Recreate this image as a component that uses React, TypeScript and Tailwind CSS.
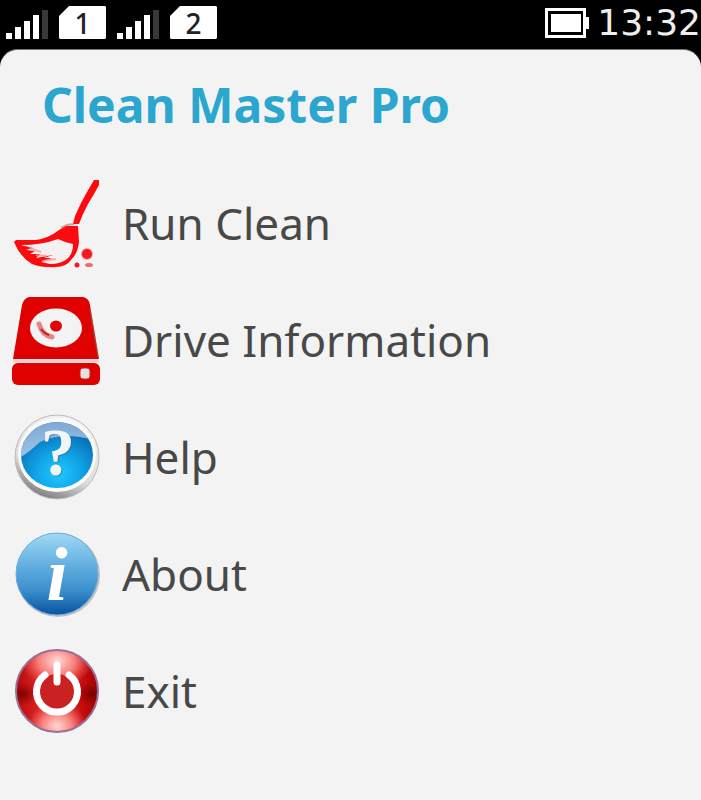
import type { ReactNode } from "react";

function Signal() {
  return (
    <svg width="42" height="30" viewBox="0 0 42 30" fill="#fff" aria-hidden="true">
      <rect x="0" y="24" width="6" height="6" />
      <rect x="9" y="18" width="6" height="12" />
      <rect x="18" y="12" width="6" height="18" />
      <rect x="27" y="6" width="6" height="24" />
      <rect x="36" y="1" width="6" height="29" fill="#383838" />
    </svg>
  );
}

function Sim({ slot }: { slot: string }) {
  return (
    <span className="relative flex h-[33px] w-[47px] items-center justify-center">
      <svg className="absolute inset-0" width="47" height="33" viewBox="0 0 47 33" aria-hidden="true">
        <path d="M10 0H46L47 1V32L46 33H1L0 32V10Z" fill="#fff" />
      </svg>
      <span className="relative text-[28px] leading-[32px] font-medium text-[#222]">{slot}</span>
    </span>
  );
}

function Battery() {
  return (
    <svg width="44" height="30" viewBox="0 0 44 30" aria-label="Battery full">
      <path d="M1.5 1.5H39.500V28.500H1.500Z" fill="#000" stroke="#fff" strokeWidth="3" />
      <rect x="6" y="6" width="30" height="18" fill="#fff" />
      <rect x="40" y="9" width="4" height="12" fill="#fff" />
    </svg>
  );
}

function BroomIcon() {
  return (
    <svg className="size-full" viewBox="0 0 88 88" aria-hidden="true">
      <path d="M82 0H87V5L82 14L76 24L71 34L67 44H61L63 36L69 23L75 12Z" fill="#fb0a0e" />
      <path d="M47 50L54 46H66L67 62Q66 73 59 80Q54 87 44 87Q31 88 20 84Q8 77 2 62L4 60H24Q37 58 47 50Z" fill="#fb0a0e" />
      <path d="M9 65Q30 65 46 59Q54 63 61 64Q61 74 55 79Q49 84 38 84L29 82L40 78L32 78L41 75L24 78L28 74L18 74L23 71L14 70L21 68Z" fill="#f6f1f1" />
      <path d="M17 68L29 72M24 75L35 76M30 81L44 79" fill="none" stroke="#f58c8e" strokeWidth="2" opacity=".7" />
      <path d="M49 48L55 45L62 44" fill="none" stroke="#a66" strokeWidth="2" opacity=".6" />
      <circle cx="75" cy="74" r="6" fill="#f6a0a2" />
      <circle cx="75" cy="74" r="5" fill="#f11b20" />
      <circle cx="65" cy="85" r="2.500" fill="#f11b20" />
      <ellipse cx="77" cy="85" rx="4" ry="2" fill="#f06a6d" />
    </svg>
  );
}

function DriveIcon() {
  return (
    <svg className="size-full" viewBox="0 0 88 88" aria-hidden="true">
      <path d="M17 0H71Q77 1 78 8L87 62H1L10 8Q12 1 17 0Z" fill="#df0000" />
      <path d="M78 12L86 60" stroke="#777" strokeWidth="1.500" opacity=".5" />
      <path d="M1 64H87" stroke="#f2cece" strokeWidth="3" />
      <rect x="0" y="66" width="88" height="22" rx="6" fill="#df0000" />
      <ellipse cx="44" cy="31" rx="26" ry="19.500" fill="#f4f3f3" />
      <ellipse cx="44" cy="29" rx="6" ry="5.500" fill="#df0808" />
      <path d="M27 27Q30 38 40 40" fill="none" stroke="#dd6262" strokeWidth="5" strokeLinecap="round" opacity=".75" />
      <path d="M29 32Q33 37 37 38" fill="none" stroke="#c51b1b" strokeWidth="2" />
      <rect x="68" y="71" width="10" height="11" rx="3" fill="#efdddd" stroke="#a33" strokeWidth="1" />
    </svg>
  );
}

function HelpIcon() {
  return (
    <svg className="size-full" viewBox="0 0 88 88" aria-hidden="true">
      <defs>
        <linearGradient id="helpRim" x1=".7" y1="0" x2=".3" y2="1">
          <stop stopColor="#f4f4f4" /><stop offset=".65" stopColor="#ddd" /><stop offset="1" stopColor="#777" />
        </linearGradient>
        <radialGradient id="helpBlue" cx=".52" cy=".78" r=".75">
          <stop stopColor="#20c9ff" /><stop offset=".45" stopColor="#10a0e4" /><stop offset="1" stopColor="#0561a8" />
        </radialGradient>
        <linearGradient id="helpShine" x1="0" y1="0" x2="0" y2="1">
          <stop stopColor="#91b4de" /><stop offset="1" stopColor="#bed2e6" />
        </linearGradient>
        <clipPath id="helpDisc"><ellipse cx="45" cy="41" rx="36" ry="33" /></clipPath>
      </defs>
      <circle cx="45" cy="43" r="42" fill="url(#helpRim)" />
      <ellipse cx="45" cy="41" rx="39" ry="37" fill="#fafafa" />
      <circle cx="45" cy="43" r="42" fill="none" stroke="#bbb" strokeWidth="1" />
      <ellipse cx="45" cy="41" rx="36" ry="33" fill="url(#helpBlue)" />
      <path d="M5 45Q14 41 28 28Q51 17 81 26V0H0Z" fill="url(#helpShine)" opacity=".82" clipPath="url(#helpDisc)" />
      <text x="47" y="62" textAnchor="middle" fontFamily="Liberation Serif, serif" fontWeight="700" fontSize="68" fill="#38658a" opacity=".55">?</text>
      <text x="46" y="61" textAnchor="middle" fontFamily="Liberation Serif, serif" fontWeight="700" fontSize="68" fill="#f2f5f7">?</text>
    </svg>
  );
}

function AboutIcon() {
  return (
    <svg className="size-full" viewBox="0 0 88 88" aria-hidden="true">
      <defs>
        <linearGradient id="aboutBlue" x1="0" y1="0" x2="0" y2="1">
          <stop stopColor="#a1d9f5" /><stop offset=".4" stopColor="#61afe0" /><stop offset=".7" stopColor="#3b8fcc" /><stop offset="1" stopColor="#0951a0" />
        </linearGradient>
      </defs>
      <circle cx="46" cy="44" r="42" fill="#aaa" opacity=".7" />
      <circle cx="45" cy="43" r="41" fill="url(#aboutBlue)" />
      <circle cx="45" cy="43" r="41" fill="none" stroke="#6baee0" strokeWidth="1" />
      <text x="45" y="69" textAnchor="middle" fontFamily="Liberation Serif, serif" fontStyle="italic" fontWeight="700" fontSize="76" fill="#fff">i</text>
    </svg>
  );
}

function ExitIcon() {
  return (
    <svg className="size-full" viewBox="0 0 88 88" aria-hidden="true">
      <defs>
        <linearGradient id="exitRed" x1="0" y1="0" x2="1" y2="0">
          <stop stopColor="#b60b0b" /><stop offset=".25" stopColor="#d72020" /><stop offset=".5" stopColor="#e44c4c" /><stop offset=".8" stopColor="#c50e0e" /><stop offset="1" stopColor="#a60000" />
        </linearGradient>
        <radialGradient id="exitGlow">
          <stop stopColor="#ffdcd8" /><stop offset=".5" stopColor="#ff9994" stopOpacity=".8" /><stop offset="1" stopColor="#ff6767" stopOpacity="0" />
        </radialGradient>
        <radialGradient id="exitShade">
          <stop stopColor="#700" /><stop offset="1" stopColor="#900" stopOpacity="0" />
        </radialGradient>
        <clipPath id="exitDisc"><circle cx="45" cy="43" r="41" /></clipPath>
      </defs>
      <circle cx="45" cy="43" r="41" fill="url(#exitRed)" />
      <g clipPath="url(#exitDisc)">
        <ellipse cx="45" cy="13" rx="36" ry="27" fill="url(#exitGlow)" />
        <ellipse cx="45" cy="78" rx="30" ry="24" fill="url(#exitGlow)" />
        <ellipse cx="9" cy="46" rx="17" ry="12" fill="url(#exitShade)" />
        <ellipse cx="80" cy="46" rx="17" ry="12" fill="url(#exitShade)" />
      </g>
      <circle cx="45" cy="43" r="41" fill="none" stroke="#987097" strokeWidth="2" />
      <circle cx="45" cy="44" r="18" fill="#ca2222" />
      <path d="M33 27A20.500 20.500 0 1 0 57 27" fill="none" stroke="#fff" strokeWidth="7" strokeLinecap="round" />
      <path d="M45 17V34" stroke="#fff" strokeWidth="7" strokeLinecap="round" />
    </svg>
  );
}

const items: { label: string; icon: ReactNode }[] = [
  { label: "Run Clean", icon: <BroomIcon /> },
  { label: "Drive Information", icon: <DriveIcon /> },
  { label: "Help", icon: <HelpIcon /> },
  { label: "About", icon: <AboutIcon /> },
  { label: "Exit", icon: <ExitIcon /> },
];

export default function App() {
  return (
    <div className="flex min-h-screen flex-col bg-black font-['Noto_Sans',sans-serif]">
      <header className="flex h-[49px] items-center justify-between pb-1 pl-[6px] text-white">
        <div className="flex items-end gap-[11px]">
          <Signal />
          <Sim slot="1" />
          <Signal />
          <Sim slot="2" />
        </div>
        <div className="flex items-center gap-2">
          <Battery />
          <time className="font-['DejaVu_Sans',sans-serif] text-[36px] leading-[44px] text-[#eee]">13:32</time>
        </div>
      </header>
      <main className="grow rounded-t-[18px] border-t border-[#777] bg-[#f3f3f3]">
        <h1 className="px-[42px] pt-[23px] pb-[28px] text-[48px] leading-[64px] font-bold text-[#2ba7cf]">Clean Master Pro</h1>
        <nav aria-label="Main menu">
          <ul>
            {items.map((item) => (
              <li key={item.label}>
                <button type="button" className="flex h-[117px] w-full items-center gap-[22px] px-3 text-left text-[44px] leading-[56px] text-[#484848]">
                  <span className="size-[88px] shrink-0">{item.icon}</span>
                  <span className="pb-[2px]">{item.label}</span>
                </button>
              </li>
            ))}
          </ul>
        </nav>
      </main>
    </div>
  );
}
